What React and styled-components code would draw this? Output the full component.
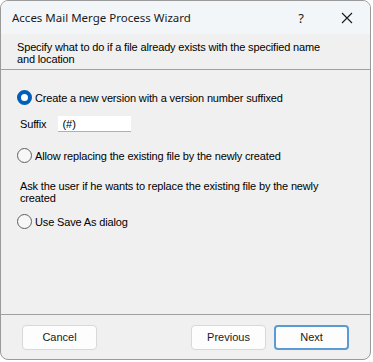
import React, {useState} from 'react';
import styled, {createGlobalStyle} from "styled-components";

const GlobalStyle = createGlobalStyle`
  html, body {
    margin: 0;
    padding: 0;
    background: #ffffff;
  }
`

const OPTIONS = [
  {id: 'version', label: 'Create a new version with a version number suffixed'},
  {id: 'replace', label: 'Allow replacing the existing file by the newly created'},
  {id: 'saveas', label: 'Use Save As dialog'},
]

const App = () => {
  const [choice, setChoice] = useState('version')
  const [suffix, setSuffix] = useState('(#)')

  return (
    <>
      <GlobalStyle/>
      <Window>
        <TitleBar>
          <Title>Acces Mail Merge Process Wizard</Title>
          <TitleButtons>
            <TitleButton>?</TitleButton>
            <TitleButton>
              <svg width="12" height="12" viewBox="0 0 12 12">
                <path d="M1 1 L11 11 M11 1 L1 11" stroke="#1a1a1a" strokeWidth="1.1" fill="none"/>
              </svg>
            </TitleButton>
          </TitleButtons>
        </TitleBar>
        <Header>
          <HeaderText>
            Specify what to do if a file already exists with the specified name and location
          </HeaderText>
        </Header>
        <Body>
          <RadioRow onClick={() => setChoice(OPTIONS[0].id)}>
            <Radio checked={choice === OPTIONS[0].id}/>
            <span>{OPTIONS[0].label}</span>
          </RadioRow>
          <SuffixRow>
            <span>Suffix</span>
            <SuffixInput value={suffix} onChange={e => setSuffix(e.target.value)}/>
          </SuffixRow>
          <RadioRow onClick={() => setChoice(OPTIONS[1].id)}>
            <Radio checked={choice === OPTIONS[1].id}/>
            <span>{OPTIONS[1].label}</span>
          </RadioRow>
          <Note>Ask the user if he wants to replace the existing file by the newly created</Note>
          <RadioRow onClick={() => setChoice(OPTIONS[2].id)}>
            <Radio checked={choice === OPTIONS[2].id}/>
            <span>{OPTIONS[2].label}</span>
          </RadioRow>
        </Body>
        <Footer>
          <Button>Cancel</Button>
          <FooterRight>
            <Button>Previous</Button>
            <Button primary>Next</Button>
          </FooterRight>
        </Footer>
      </Window>
    </>
  );
};

const Window = styled.div`
  width: 371px;
  height: 360px;
  box-sizing: border-box;
  border: 1px solid #9a9a9a;
  border-radius: 8px;
  background: #f0f0f0;
  overflow: hidden;
  display: flex;
  flex-direction: column;
  font-family: "Liberation Sans", Arial, sans-serif;
  font-size: 11px;
  letter-spacing: -0.15px;
  color: #000;
`
const TitleBar = styled.div`
  height: 33px;
  display: flex;
  align-items: center;
  justify-content: space-between;
  padding-left: 11px;
  background: #f3f6f9;
  flex-shrink: 0;
`
const Title = styled.div`
  font-family: "Noto Sans", "Open Sans", sans-serif;
  font-size: 11.5px;
  letter-spacing: 0;
  color: #1a1a1a;
`
const TitleButtons = styled.div`
  display: flex;
  height: 100%;
`
const TitleButton = styled.div`
  width: 46px;
  height: 100%;
  display: flex;
  align-items: center;
  justify-content: center;
  font-family: "Noto Sans", sans-serif;
  font-size: 13px;
  color: #1a1a1a;
`
const Header = styled.div`
  padding: 7px 0 0 16px;
  height: 28px;
  border-bottom: 1px solid #a0a0a0;
  flex-shrink: 0;
`
const HeaderText = styled.div`
  max-width: 315px;
  line-height: 12px;
`
const Body = styled.div`
  flex: 1;
  display: flex;
  flex-direction: column;
  padding: 20px 16px 0 16px;
  border-bottom: 1px solid #a0a0a0;
`
const RadioRow = styled.label`
  display: flex;
  align-items: center;
  gap: 3px;
  height: 15px;
  margin-bottom: 10px;
  cursor: default;
`
const Radio = styled.span`
  width: 15px;
  height: 15px;
  box-sizing: border-box;
  border-radius: 50%;
  flex-shrink: 0;
  border: ${p => p.checked ? '4.5px solid #005fb8' : '1px solid #606060'};
  background: ${p => p.checked ? '#ffffff' : '#f7f7f7'};
`
const SuffixRow = styled.div`
  display: flex;
  align-items: center;
  padding-left: 3px;
  gap: 12px;
  margin-top: 1px;
  margin-bottom: 16px;
`
const SuffixInput = styled.input`
  width: 73px;
  height: 16px;
  box-sizing: border-box;
  border: none;
  border-bottom: 1px solid #b0b0b0;
  background: #fff;
  font: inherit;
  padding: 0 4px;
  outline: none;
`
const Note = styled.div`
  padding-left: 3px;
  max-width: 310px;
  line-height: 12px;
  margin-top: 7px;
  margin-bottom: 10px;
`
const Footer = styled.div`
  height: 44px;
  flex-shrink: 0;
  display: flex;
  align-items: center;
  justify-content: space-between;
  padding: 0 21px;
`
const FooterRight = styled.div`
  display: flex;
  gap: 8px;
`
const Button = styled.button`
  width: 75px;
  height: 25px;
  box-sizing: border-box;
  border-radius: 4px;
  background: #fdfdfd;
  border: ${p => p.primary ? '2px solid #5b9bd5' : '1px solid #d8d8d8'};
  font: inherit;
  font-size: 11px;
  color: #1a1a1a;
`

export default App;
